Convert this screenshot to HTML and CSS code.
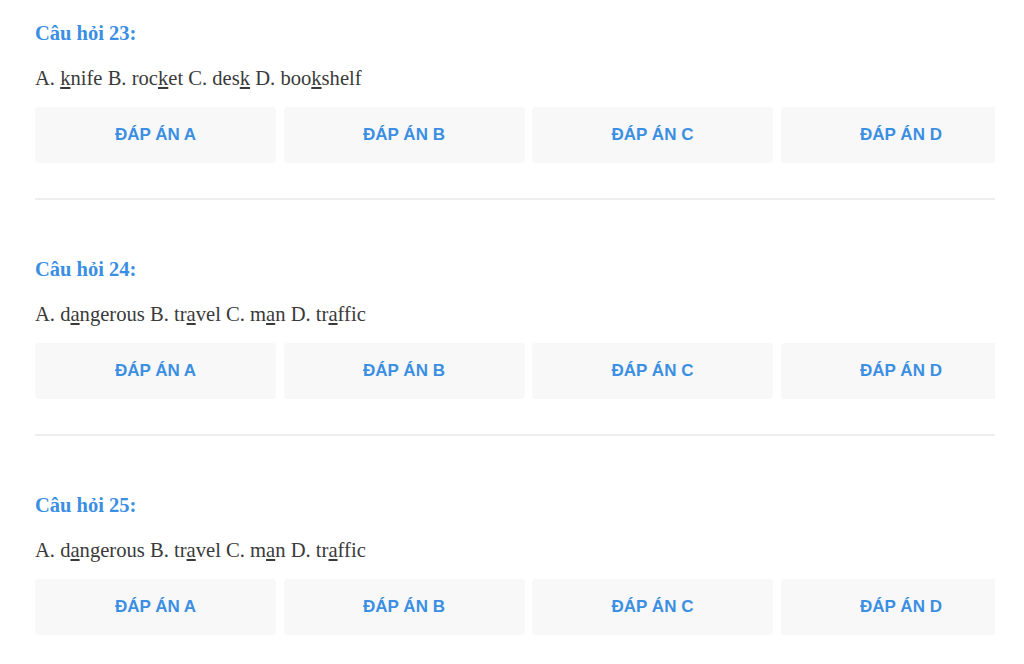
FILE: index.html
```html
<!DOCTYPE html>
<html lang="vi">
   <head>
      <meta charset="UTF-8">
      <link rel="stylesheet" href="styles.css">
   </head>
   <body>
      <div class="quiz">
         <div class="question">
            <h3 class="q_title">Câu hỏi 23:</h3>
            <p class="q_text">A. <u>k</u>nife B. roc<u>k</u>et C. des<u>k</u> D. boo<u>k</u>shelf</p>
            <div class="answers">
               <div class="answer">ĐÁP ÁN A</div>
               <div class="answer">ĐÁP ÁN B</div>
               <div class="answer">ĐÁP ÁN C</div>
               <div class="answer">ĐÁP ÁN D</div>
            </div>
         </div>
         <hr class="divider">
         <div class="question">
            <h3 class="q_title">Câu hỏi 24:</h3>
            <p class="q_text">A. d<u>a</u>ngerous B. tr<u>a</u>vel C. m<u>a</u>n D. tr<u>a</u>ffic</p>
            <div class="answers">
               <div class="answer">ĐÁP ÁN A</div>
               <div class="answer">ĐÁP ÁN B</div>
               <div class="answer">ĐÁP ÁN C</div>
               <div class="answer">ĐÁP ÁN D</div>
            </div>
         </div>
         <hr class="divider">
         <div class="question">
            <h3 class="q_title">Câu hỏi 25:</h3>
            <p class="q_text">A. d<u>a</u>ngerous B. tr<u>a</u>vel C. m<u>a</u>n D. tr<u>a</u>ffic</p>
            <div class="answers">
               <div class="answer">ĐÁP ÁN A</div>
               <div class="answer">ĐÁP ÁN B</div>
               <div class="answer">ĐÁP ÁN C</div>
               <div class="answer">ĐÁP ÁN D</div>
            </div>
         </div>
      </div>
   </body>
</html>
```

FILE: styles.css
```css
body{
    margin: 0;
    background: #ffffff;
}

.quiz{
    width: 960px;
    margin-left: 35px;
    padding-top: 21px;
    overflow: hidden;
}

.q_title{
    margin: 0;
    font-family: "Liberation Serif", "Times New Roman", serif;
    font-size: 20.5px;
    line-height: 24px;
    font-weight: bold;
    color: #3b8fe3;
}

.q_text{
    margin: 21px 0 0 0;
    font-family: "Liberation Serif", "Times New Roman", serif;
    font-size: 20.6px;
    line-height: 24px;
    color: #3a3a3a;
}

.answers{
    display: grid;
    grid-template-columns: repeat(4, 241px);
    column-gap: 7.5px;
    width: 987px;
    margin-top: 17px;
}

.answer{
    height: 56px;
    display: flex;
    align-items: center;
    justify-content: center;
    background: #f8f8f9;
    border-radius: 4px;
    font-family: "Liberation Sans", Arial, sans-serif;
    font-size: 17px;
    font-weight: bold;
    color: #3b8fe3;
}

.divider{
    margin: 35px 0 57px 0;
    border: 0;
    height: 2px;
    background: #eeeeee;
}
```
